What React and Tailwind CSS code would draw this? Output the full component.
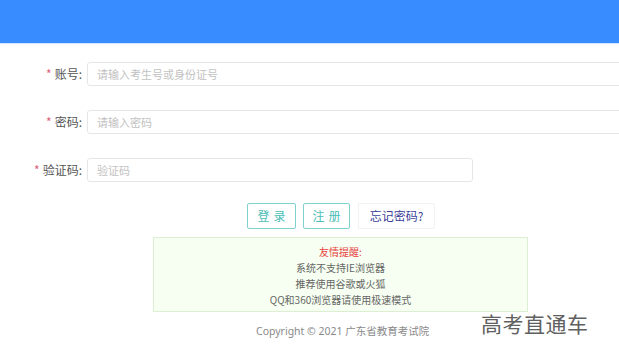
import React from 'react';

const fields = [
  { label: '账号', placeholder: '请输入考生号或身份证号', width: 'w-[560px]' },
  { label: '密码', placeholder: '请输入密码', width: 'w-[560px]' },
  { label: '验证码', placeholder: '验证码', width: 'w-[386px]' },
];

const tips = ['系统不支持IE浏览器', '推荐使用谷歌或火狐', 'QQ和360浏览器请使用极速模式'];

export default function App() {
  return (
    <div className="relative w-[619px] h-[363px] overflow-hidden bg-white font-['Noto_Sans_CJK_SC',_'Noto_Sans',_sans-serif]">
      <div className="h-[44px] bg-[#388cff] border-b border-[#cfe3ff]" />

      <div className="mt-[18px] flex flex-col gap-[24px]">
        {fields.map((f) => (
          <div key={f.label} className="flex items-center">
            <div className="w-[87px] shrink-0 pr-[5px] text-right text-[12px] text-[#555]">
              <span className="text-[#e0607a] mr-[3px]">*</span>
              {f.label}:
            </div>
            <input
              readOnly
              placeholder={f.placeholder}
              className={`${f.width} shrink-0 h-[24px] rounded-[3px] border border-[#e6e6e6] bg-white pl-[9px] text-[11px] placeholder:text-[#c2c2c2] outline-none`}
            />
          </div>
        ))}
      </div>

      <div className="mt-[21px] flex items-center gap-[7px] pl-[247px]">
        <button className="w-[49px] h-[26px] border border-[#7fd3cf] rounded-[2px] text-[12px] text-[#4bbdb6] tracking-[4px] pl-[4px]">
          登录
        </button>
        <button className="w-[47px] h-[26px] border border-[#7fd3cf] rounded-[2px] text-[12px] text-[#4bbdb6] tracking-[4px] pl-[4px]">
          注册
        </button>
        <button className="ml-[1px] w-[77px] h-[26px] border border-[#f2f2f2] rounded-[2px] text-[12px] text-[#3b3f9a]">
          忘记密码?
        </button>
      </div>

      <div className="ml-[153px] mt-[8px] w-[375px] h-[75px] border border-[#dcefd2] bg-[#f6fff1] flex flex-col items-center pt-[6px] text-[10px] leading-[16px] text-[#666]">
        <div className="text-[#e8413f]">友情提醒:</div>
        {tips.map((t) => (
          <div key={t}>{t}</div>
        ))}
      </div>

      <div className="mt-[12px] pl-[256px] text-[10.5px] text-[#8a8a8a] font-['Noto_Sans',_'Noto_Sans_CJK_SC',_sans-serif]">
        Copyright © 2021 广东省教育考试院
      </div>

      <div className="absolute left-[481px] top-[308px] text-[21px] tracking-[0.5px] text-[#606060]">
        高考直通车
      </div>
    </div>
  );
}
